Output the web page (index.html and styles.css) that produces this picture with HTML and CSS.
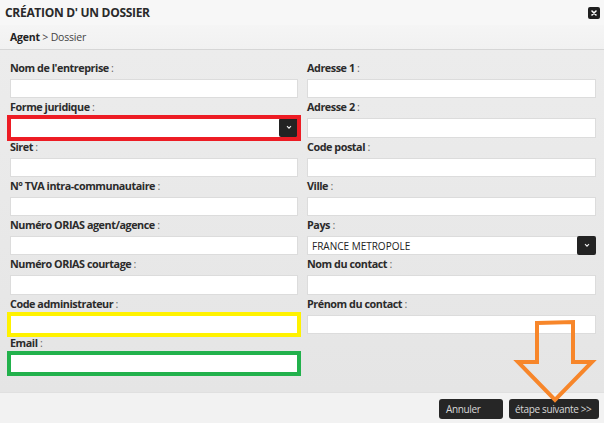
FILE: index.html
```html
<!DOCTYPE html>
<html lang="fr">
<head>
<meta charset="utf-8">
<title>Création d'un dossier</title>
<link rel="stylesheet" href="styles.css">
</head>
<body>
<div class="dialog">
  <div class="titlebar">
    <span class="title">CRÉATION D' UN DOSSIER</span>
    <span class="close"><svg width="12" height="12" viewBox="0 0 12 12"><rect width="12" height="12" rx="2" fill="#1f1f1f"/><path d="M4 4L8 8M8 4L4 8" stroke="#fff" stroke-width="1.6" stroke-linecap="round"/></svg></span>
  </div>
  <div class="crumb"><b>Agent</b> &gt; Dossier</div>
  <div class="form">
    <div class="col">
      <div class="field"><label>Nom de l'entreprise <i>:</i></label><div class="input"></div></div>
      <div class="field"><label>Forme juridique <i>:</i></label><div class="input select mark-red"><span class="val"></span><span class="arrow"><svg width="8" height="5" viewBox="0 0 8 5"><path d="M2 1.2L4 3.2L6 1.2" stroke="#eee" stroke-width="1.1" fill="none"/></svg></span></div></div>
      <div class="field"><label>Siret <i>:</i></label><div class="input"></div></div>
      <div class="field"><label>N° TVA intra-communautaire <i>:</i></label><div class="input"></div></div>
      <div class="field"><label>Numéro ORIAS agent/agence <i>:</i></label><div class="input"></div></div>
      <div class="field"><label>Numéro ORIAS courtage <i>:</i></label><div class="input"></div></div>
      <div class="field"><label>Code administrateur <i>:</i></label><div class="input mark-yellow"></div></div>
      <div class="field"><label>Email <i>:</i></label><div class="input mark-green"></div></div>
    </div>
    <div class="col">
      <div class="field"><label>Adresse 1 <i>:</i></label><div class="input"></div></div>
      <div class="field"><label>Adresse 2 <i>:</i></label><div class="input"></div></div>
      <div class="field"><label>Code postal <i>:</i></label><div class="input"></div></div>
      <div class="field"><label>Ville <i>:</i></label><div class="input"></div></div>
      <div class="field"><label>Pays <i>:</i></label><div class="input select"><span class="val">FRANCE METROPOLE</span><span class="arrow"><svg width="8" height="5" viewBox="0 0 8 5"><path d="M2 1.2L4 3.2L6 1.2" stroke="#eee" stroke-width="1.1" fill="none"/></svg></span></div></div>
      <div class="field"><label>Nom du contact <i>:</i></label><div class="input"></div></div>
      <div class="field"><label>Prénom du contact <i>:</i></label><div class="input"></div></div>
    </div>
  </div>
  <div class="footer">
    <span class="btn btn-cancel">Annuler</span>
    <span class="btn btn-next">étape suivante &gt;&gt;</span>
  </div>
  <svg class="annot-arrow" width="604" height="423" viewBox="0 0 604 423"><path d="M537 323L573 322L573 362L592 362L555 400L518 362L537 362Z" fill="none" stroke="#f7862a" stroke-width="4" stroke-linejoin="miter"/></svg>
</div>
</body>
</html>
```
FILE: styles.css
```css
* { box-sizing: border-box; }
html, body { margin: 0; padding: 0; }
body {
  width: 604px;
  height: 423px;
  overflow: hidden;
  font-family: "Open Sans", "Liberation Sans", sans-serif;
  color: #333;
  background: #f2f2f2;
}
.dialog {
  position: relative;
  width: 604px;
  height: 423px;
  display: flex;
  flex-direction: column;
}
.titlebar {
  height: 25px;
  display: flex;
  align-items: center;
  justify-content: space-between;
  padding: 0 4px 0 5px;
  background: #f7f7f7;
}
.title {
  font-size: 12px;
  font-weight: 700;
  color: #2a2a2a;
  letter-spacing: -0.3px;
}
.close { display: flex; margin-top: 1px; }
.crumb {
  height: 25px;
  padding: 4px 0 0 10px;
  font-size: 10.5px;
  line-height: 16px;
  color: #444;
  background: linear-gradient(#f5f5f5, #f1f1f1);
  border-bottom: 1px solid #d6d6d6;
  letter-spacing: -0.2px;
}
.crumb b { color: #222; }
.form {
  flex: 1;
  display: grid;
  grid-template-columns: 288px 289px;
  column-gap: 9px;
  padding: 9px 8px 0 10px;
  background: linear-gradient(#ececec, #e5e5e5);
  border-bottom: 1px solid #e0e0e0;
}
.col { display: flex; flex-direction: column; }
.field { display: flex; flex-direction: column; }
label {
  height: 20px;
  line-height: 17px;
  font-size: 10.8px;
  font-weight: 700;
  color: #2b2b2b;
  letter-spacing: -0.45px;
}
label i { font-style: normal; font-weight: 400; color: #666; }
.input {
  height: 19.3px;
  background: #fff;
  border: 1px solid #dcdcdc;
}
.select {
  display: flex;
  align-items: center;
  justify-content: space-between;
  border-right: none;
}
.select .val {
  padding-left: 4px;
  font-size: 10px;
  color: #222;
}
.select .arrow {
  width: 19px;
  height: 19px;
  margin: -1px 0;
  background: #232323;
  border-radius: 2px;
  display: flex;
  align-items: center;
  justify-content: center;
}
.mark-red { outline: 4px solid #ed1c24; outline-offset: -1px; }
.mark-yellow { outline: 4px solid #fff200; outline-offset: -1px; }
.mark-green { outline: 4px solid #22b14c; outline-offset: -1px; }
.footer {
  height: 30px;
  display: flex;
  justify-content: flex-end;
  align-items: center;
  gap: 6px;
  padding: 2px 5px 0 0;
  background: #f2f2f2;
}
.btn {
  height: 20px;
  display: flex;
  align-items: center;
  padding: 0 6px;
  background: #262626;
  border-radius: 3px;
  color: #d8d8d8;
  font-size: 10px;
  letter-spacing: -0.35px;
  white-space: nowrap;
}
.btn-cancel { width: 64px; padding-left: 7px; }
.btn-next { width: 90px; }
.annot-arrow {
  position: absolute;
  left: 0;
  top: 0;
  pointer-events: none;
}
```
